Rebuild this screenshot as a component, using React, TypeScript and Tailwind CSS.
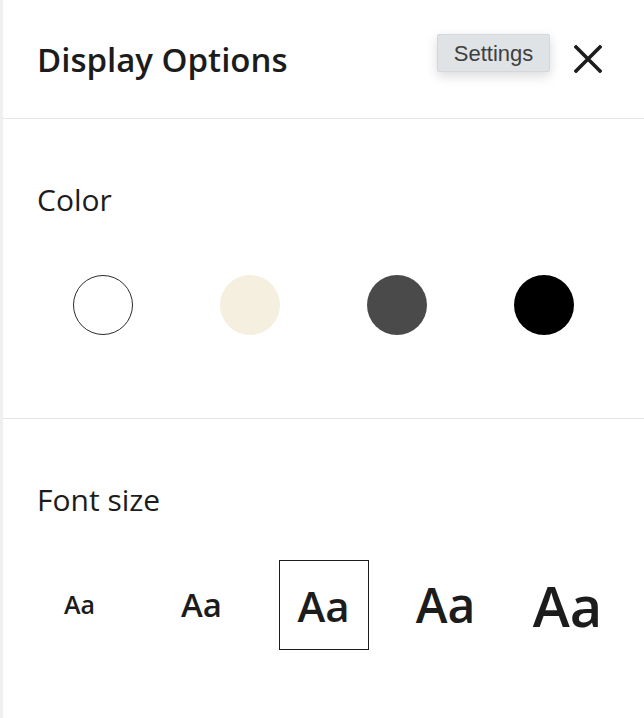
const colors = [
  { name: "White", className: "bg-white border border-[#2b2b2b]" },
  { name: "Sepia", className: "bg-[#f5efe0]" },
  { name: "Gray", className: "bg-[#4a4a4a]" },
  { name: "Black", className: "bg-black" },
];

const sizes = [
  { label: "Extra small", className: "text-[25px]" },
  { label: "Small", className: "text-[33px]" },
  { label: "Medium", className: "text-[42px]", selected: true },
  { label: "Large", className: "text-[48px]" },
  { label: "Extra large", className: "text-[56px]" },
];

export default function App() {
  return (
    <div className="flex min-h-[718px] w-full bg-white text-[#1c1c1c] font-['Open_Sans',sans-serif]">
      <div className="w-[3px] shrink-0 bg-[#efefef]" />
      <div className="flex-1">
        <header className="flex h-[119px] items-center justify-between border-b border-[#e6e6e6] pl-[34px] pr-[42px]">
          <h2 className="text-[33px] font-semibold leading-none">Display Options</h2>
          <button className="relative flex h-[28px] w-[28px] items-center justify-center" aria-label="Close">
            <span className="absolute right-full top-[-11px] mr-[24px] flex h-[38px] w-[113px] items-center justify-center rounded-[2px] border border-[#d4d8dc] bg-[#dfe3e6] text-[22px] text-[#3f3f3f] shadow-[0_4px_12px_rgba(0,0,0,0.15)] font-['Liberation_Sans',sans-serif]">
              Settings
            </span>
            <svg width="28" height="28" viewBox="0 0 28 28" fill="none" stroke="#1c1c1c" strokeWidth="3.6" strokeLinecap="square">
              <path d="M2 2L26 26M26 2L2 26" />
            </svg>
          </button>
        </header>

        <section className="border-b border-[#e6e6e6] pt-[65px] pb-[83px]">
          <p className="pl-[34px] text-[30px] leading-[32px] font-normal">Color</p>
          <div className="mx-auto mt-[59px] grid w-[587px] grid-cols-4">
            {colors.map((c) => (
              <div key={c.name} className="flex justify-center">
                <button aria-label={c.name} className={`h-[60px] w-[60px] rounded-full ${c.className}`} />
              </div>
            ))}
          </div>
        </section>

        <section className="pt-[65px] pb-[68px]">
          <p className="pl-[34px] text-[30px] leading-[32px] font-normal">Font size</p>
          <div className="mx-auto mt-[44px] grid w-[610px] grid-cols-5">
            {sizes.map((s) => (
              <div key={s.label} className="flex justify-center">
                <button
                  aria-label={s.label}
                  className={`flex h-[90px] w-[90px] items-center justify-center font-[550] ${s.className} ${s.selected ? "border border-[#1c1c1c]" : ""}`}
                >
                  Aa
                </button>
              </div>
            ))}
          </div>
        </section>
      </div>
    </div>
  );
}
